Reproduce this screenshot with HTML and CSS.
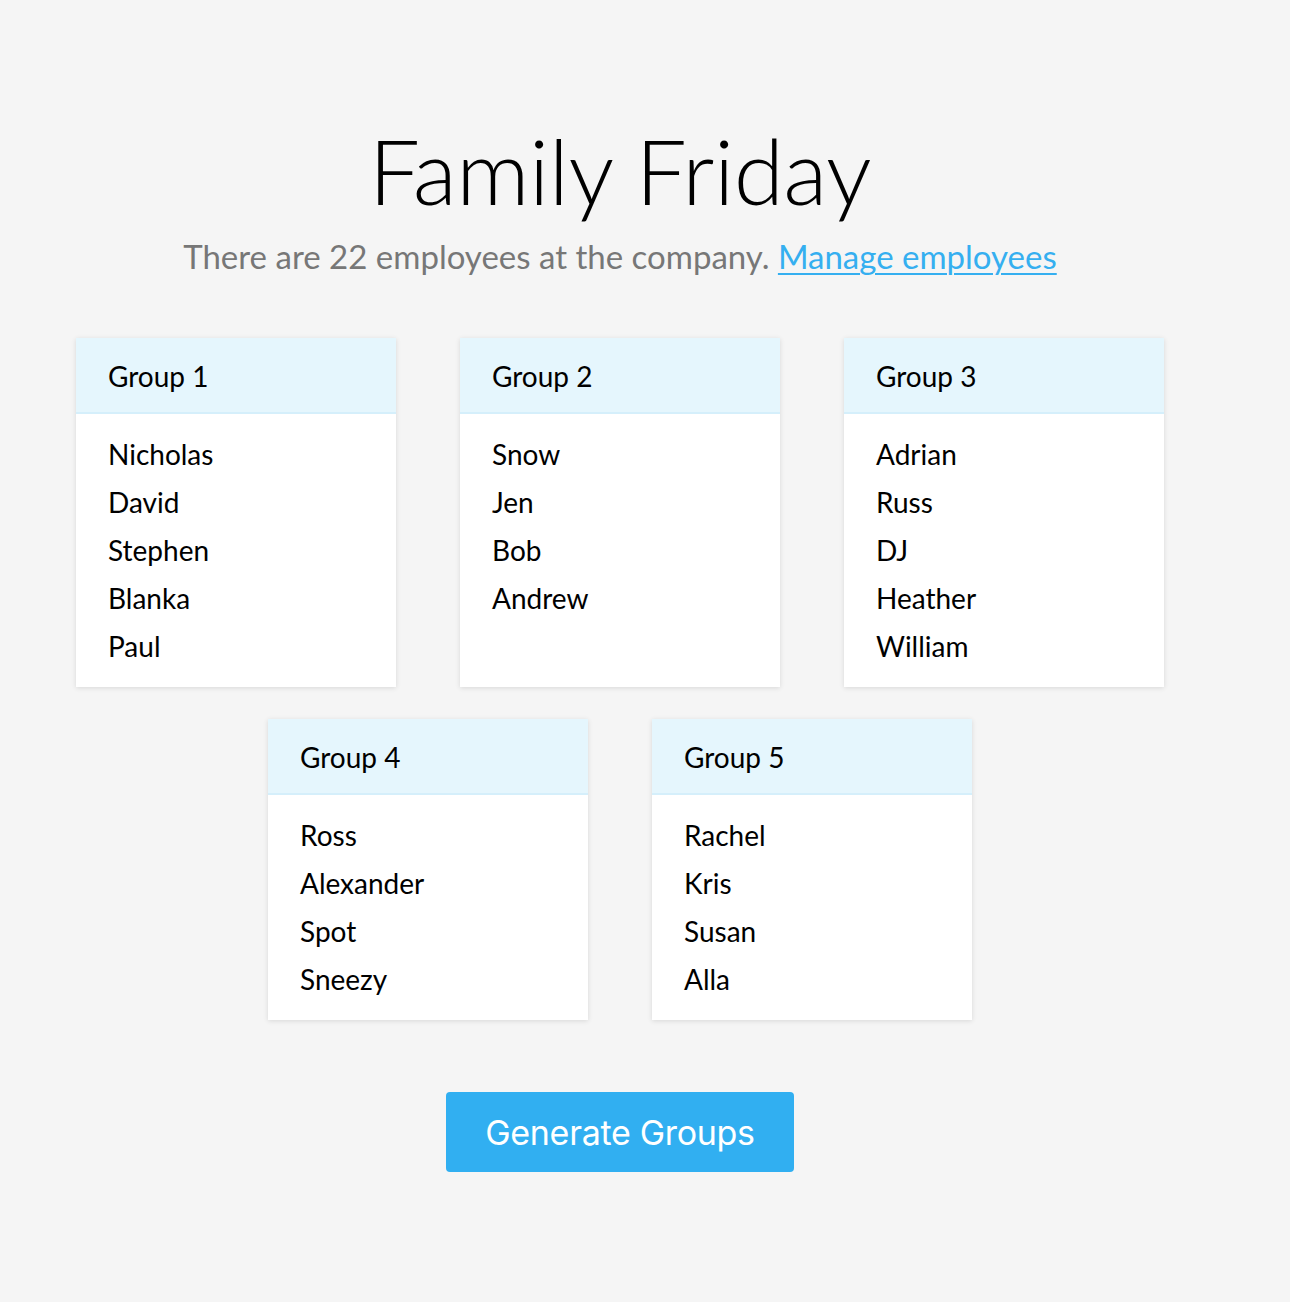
FILE: index.html
```html
<!DOCTYPE html>
<html>
<head>
<meta charset="utf-8">
<link rel="stylesheet" href="styles.css">
</head>
<body>
<div class="page">
  <h1 class="title">Family Friday</h1>
  <p class="subtitle">There are 22 employees at the company. <a href="#" class="link">Manage employees</a></p>
  <div class="groups">
    <div class="card">
      <div class="card-head">Group 1</div>
      <ul class="card-body"><li>Nicholas</li><li>David</li><li>Stephen</li><li>Blanka</li><li>Paul</li></ul>
    </div>
    <div class="card">
      <div class="card-head">Group 2</div>
      <ul class="card-body"><li>Snow</li><li>Jen</li><li>Bob</li><li>Andrew</li></ul>
    </div>
    <div class="card">
      <div class="card-head">Group 3</div>
      <ul class="card-body"><li>Adrian</li><li>Russ</li><li>DJ</li><li>Heather</li><li>William</li></ul>
    </div>
    <div class="card">
      <div class="card-head">Group 4</div>
      <ul class="card-body"><li>Ross</li><li>Alexander</li><li>Spot</li><li>Sneezy</li></ul>
    </div>
    <div class="card">
      <div class="card-head">Group 5</div>
      <ul class="card-body"><li>Rachel</li><li>Kris</li><li>Susan</li><li>Alla</li></ul>
    </div>
  </div>
  <div class="actions"><button class="btn">Generate Groups</button></div>
</div>
</body>
</html>
```
FILE: styles.css
```css
html, body {
  margin: 0;
  padding: 0;
  background: #f5f5f5;
}
body {
  font-family: Lato, "Open Sans", sans-serif;
  color: #000;
}
.page {
  width: 1240px;
  padding-top: 118px;
  padding-bottom: 100px;
  text-align: center;
}
.title {
  margin: 0;
  font-size: 91px;
  font-weight: 300;
  line-height: 104px;
  letter-spacing: -0.5px;
}
.subtitle {
  margin: 0;
  margin-top: 14px;
  font-size: 33px;
  line-height: 40px;
  color: #777;
  font-weight: 400;
}
.link {
  color: #35aff0;
  text-decoration: underline;
  text-decoration-thickness: 2px;
  text-underline-offset: 4px;
}
.groups {
  display: flex;
  flex-wrap: wrap;
  justify-content: center;
  column-gap: 64px;
  row-gap: 32px;
  margin: 62px auto 0;
  width: 1088px;
}
.card {
  width: 320px;
  background: #fff;
  box-shadow: 0 1px 5px rgba(0, 0, 0, 0.12);
  text-align: left;
}
.card-head {
  background: #e5f6fd;
  border-bottom: 2px solid #d5effb;
  box-sizing: border-box;
  height: 76px;
  padding: 1px 32px 0;
  display: flex;
  align-items: center;
  font-size: 28px;
}
.card-body {
  list-style: none;
  margin: 0;
  padding: 16px 32px 17px;
}
.card-body li {
  font-size: 28px;
  line-height: 48px;
}
.actions {
  margin-top: 72px;
}
.btn {
  font-family: Inter, Roboto, sans-serif;
  background: #31aff1;
  color: #fff;
  border: none;
  border-radius: 4px;
  font-size: 34px;
  width: 348px;
  height: 80px;
  padding: 0;
  letter-spacing: -0.3px;
  cursor: pointer;
}
```
